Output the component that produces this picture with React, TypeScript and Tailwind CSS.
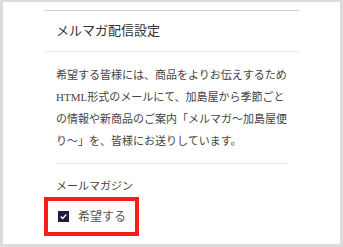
import React from "react";

const font = { fontFamily: '"Liberation Serif", "Noto Sans CJK JP", serif' };

export default function App() {
  return (
    <div
      className="w-[343px] h-[247px] bg-[#dcdcdc] pt-[2px] px-[3px] pb-[3px]"
      style={font}
    >
      <div className="bg-white h-full pt-[8px] px-[41px]">
        <div className="border-t border-[#cfcfcf]">
          <div className="h-[41px] flex items-center pl-[12px] text-[13px] text-[#333] border-b border-[#ececec]">
            メルマガ配信設定
          </div>
          <div className="mx-[11px]">
            <p className="pt-[12px] pb-[11px] pl-[1px] text-[11px] leading-[22px] text-[#444] whitespace-nowrap border-b border-[#e8e8e8]">
              希望する皆様には、商品をよりお伝えするため
              <br />
              HTML形式のメールにて、加島屋から季節ごと
              <br />
              の情報や新商品のご案内「メルマガ〜加島屋便
              <br />
              り〜」を、皆様にお送りしています。
            </p>
          </div>
          <div className="pt-[14px] pl-[12px] text-[11px] leading-[16px] text-[#444]">
            メールマガジン
          </div>
          <div className="mt-[3px] w-[95px] h-[39px] border-[4px] border-[#f51c1c] flex items-center pl-[10px] gap-[9px]">
            <span className="w-[11px] h-[11px] bg-[#1d1d3d] flex items-center justify-center">
              <svg width="9" height="9" viewBox="0 0 9 9">
                <path d="M1.8 4.6 L3.7 6.4 L7.3 2.6" stroke="white" strokeWidth="1.4" fill="none" />
              </svg>
            </span>
            <span className="text-[12px] text-[#555] leading-none">希望する</span>
          </div>
        </div>
      </div>
    </div>
  );
}
